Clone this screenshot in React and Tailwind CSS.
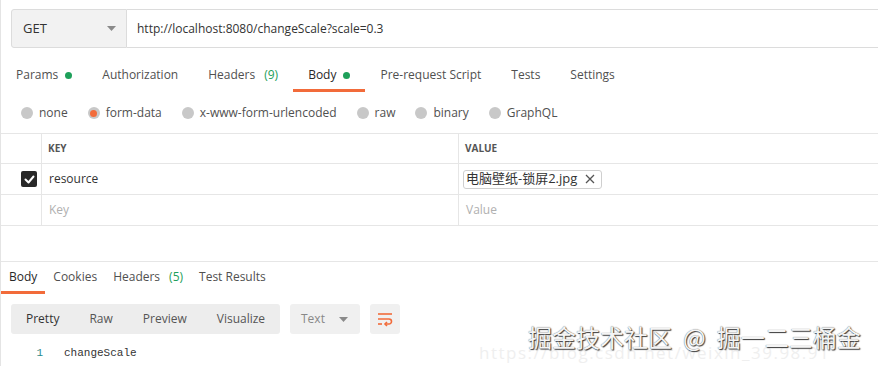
import React from 'react';

const font = { fontFamily: '"Open Sans", "Noto Sans CJK SC", sans-serif' };

const Caret = ({ className = '' }) => (
  <svg width="9" height="5" viewBox="0 0 9 5" className={className}>
    <path d="M0 0h9L4.5 5z" fill="#8a8a8a" />
  </svg>
);

const Dot = () => <span className="inline-block w-[7px] h-[7px] rounded-full bg-[#1ea05a] ml-[7px]" />;

const requestTabs = [
  { label: 'Params', dot: true },
  { label: 'Authorization' },
  { label: 'Headers', count: '(9)' },
  { label: 'Body', dot: true, active: true },
  { label: 'Pre-request Script' },
  { label: 'Tests' },
  { label: 'Settings' },
];

const bodyTypes = ['none', 'form-data', 'x-www-form-urlencoded', 'raw', 'binary', 'GraphQL'];

const responseTabs = [
  { label: 'Body', active: true },
  { label: 'Cookies' },
  { label: 'Headers', count: '(5)' },
  { label: 'Test Results' },
];

export default function App() {
  return (
    <div
      className="relative w-[878px] h-[366px] overflow-hidden bg-white border-l border-[#e4e4e4] text-[12px] text-[#505050]"
      style={font}
    >
      {/* url bar */}
      <div className="flex h-[39px] mt-[9px] ml-[10px]">
        <div className="w-[116px] flex items-center justify-between pl-[11px] pr-[10px] bg-[#f2f2f2] border border-[#dcdcdc] rounded-l-[3px] text-[13px] text-[#333]">
          <span>GET</span>
          <Caret />
        </div>
        <div className="flex-1 flex items-center pl-[10px] border-y border-[#dcdcdc] text-[#333]">
          http://localhost:8080/changeScale?scale=0.3
        </div>
      </div>

      {/* request tabs */}
      <div className="flex mt-[13px] h-[31px]">
        {requestTabs.map((t) => (
          <div
            key={t.label}
            className={`flex items-center px-[15px] border-b-[3px] ${
              t.active ? 'border-[#f26b3a] text-[#282828]' : 'border-transparent'
            }`}
          >
            <span>{t.label}</span>
            {t.count && <span className="ml-[9px] text-[#1ea05a]">{t.count}</span>}
            {t.dot && <Dot />}
          </div>
        ))}
      </div>

      {/* body type radios */}
      <div className="flex items-center h-[26px] mt-[8px] pl-[20px]">
        {bodyTypes.map((b) => (
          <div key={b} className="flex items-center mr-[20px]">
            <span className="w-[12px] h-[12px] rounded-full bg-[#c8c8c8] flex items-center justify-center">
              {b === 'form-data' && <span className="w-[7px] h-[7px] rounded-full bg-[#f26b3a]" />}
            </span>
            <span className="ml-[6px]">{b}</span>
          </div>
        ))}
      </div>

      {/* form-data table */}
      <div className="mt-[7px] border-t border-[#e6e6e6]">
        <div className="grid grid-cols-[41px_417px_1fr] h-[30px] border-b border-[#e6e6e6] text-[10px] font-bold text-[#555]">
          <div className="border-r border-[#e6e6e6]" />
          <div className="flex items-center pl-[6px] border-r border-[#e6e6e6]">KEY</div>
          <div className="flex items-center pl-[6px]">VALUE</div>
        </div>
        <div className="grid grid-cols-[41px_417px_1fr] h-[31px] border-b border-[#e6e6e6]">
          <div className="flex items-center justify-end pr-[4px] border-r border-[#e6e6e6]">
            <span className="w-[16px] h-[16px] rounded-[2px] bg-[#282828] flex items-center justify-center">
              <svg width="11" height="9" viewBox="0 0 11 9">
                <path d="M1.5 4.5l3 3 5-6" fill="none" stroke="#fff" strokeWidth="2" strokeLinecap="round" strokeLinejoin="round" />
              </svg>
            </span>
          </div>
          <div className="flex items-center pl-[7px] border-r border-[#e6e6e6] text-[#333]">resource</div>
          <div className="flex items-center pl-[4px]">
            <span className="flex items-center h-[19px] pl-[2px] pr-[6px] border border-[#cfcfcf] rounded-[3px] text-[13px] text-[#333]">
              电脑壁纸-锁屏2.jpg
              <svg width="10" height="10" viewBox="0 0 10 10" className="ml-[8px]">
                <path d="M1 1l8 8M9 1l-8 8" stroke="#555" strokeWidth="1.3" />
              </svg>
            </span>
          </div>
        </div>
        <div className="grid grid-cols-[41px_417px_1fr] h-[31px] border-b border-[#e6e6e6] text-[#b0b0b0]">
          <div className="border-r border-[#e6e6e6]" />
          <div className="flex items-center pl-[7px] border-r border-[#e6e6e6]">Key</div>
          <div className="flex items-center pl-[7px]">Value</div>
        </div>
      </div>

      {/* response */}
      <div className="mt-[35px] border-t border-[#e6e6e6]">
        <div className="flex h-[32px]">
          {responseTabs.map((t) => (
            <div
              key={t.label}
              className={`flex items-center px-[8px] border-b-[3px] ${
                t.active ? 'border-[#f26b3a] text-[#282828]' : 'border-transparent'
              }`}
            >
              <span>{t.label}</span>
              {t.count && <span className="ml-[9px] text-[#1ea05a]">{t.count}</span>}
            </div>
          ))}
        </div>

        <div className="flex mt-[10px] ml-[10px] h-[30px]">
          <div className="w-[269px] flex items-center bg-[#ededed] rounded-[3px] text-[#555]">
            {['Pretty', 'Raw', 'Preview', 'Visualize'].map((v) => (
              <span key={v} className={`px-[15px] ${v === 'Pretty' ? 'text-[#333]' : ''}`}>{v}</span>
            ))}
          </div>
          <div className="ml-[10px] w-[70px] flex items-center justify-between pl-[11px] pr-[12px] bg-[#f0f0f0] rounded-[3px] text-[#888]">
            <span>Text</span>
            <Caret />
          </div>
          <div className="ml-[10px] w-[30px] flex items-center justify-center bg-[#f0f0f0] rounded-[3px]">
            <svg width="18" height="16" viewBox="0 0 18 16" fill="none" stroke="#f26b3a" strokeWidth="1.6">
              <path d="M2 3h14" />
              <path d="M2 8h11a2.5 2.5 0 0 1 0 5H9" />
              <path d="M11 11l-2 2 2 2" />
              <path d="M2 13h4" />
            </svg>
          </div>
        </div>

        <div className="flex items-center h-[18px] mt-[10px] text-[11px]" style={{ fontFamily: '"Liberation Mono", monospace' }}>
          <span className="w-[42px] text-right text-[#2b8a8a]">1</span>
          <span className="ml-[21px] text-[#333]">changeScale</span>
        </div>
      </div>

      {/* watermark */}
      <div className="absolute left-[478px] top-[340px] text-[17px] text-[#efefef] tracking-[1.5px]">
        https://blog.csdn.net/weixin_39.98.91
      </div>
      <div
        className="absolute left-[527px] top-[319px] flex items-center text-[24px] text-[#f4f4f4] [text-shadow:1px_1px_1px_#3a3a3a,0_0_1px_#555]"
        style={{ fontFamily: '"Noto Sans CJK SC", sans-serif' }}
      >
        <span>掘金技术社区</span>
        <span className="mx-[11px]">@</span>
        <span>掘一二三桶金</span>
      </div>
    </div>
  );
}
